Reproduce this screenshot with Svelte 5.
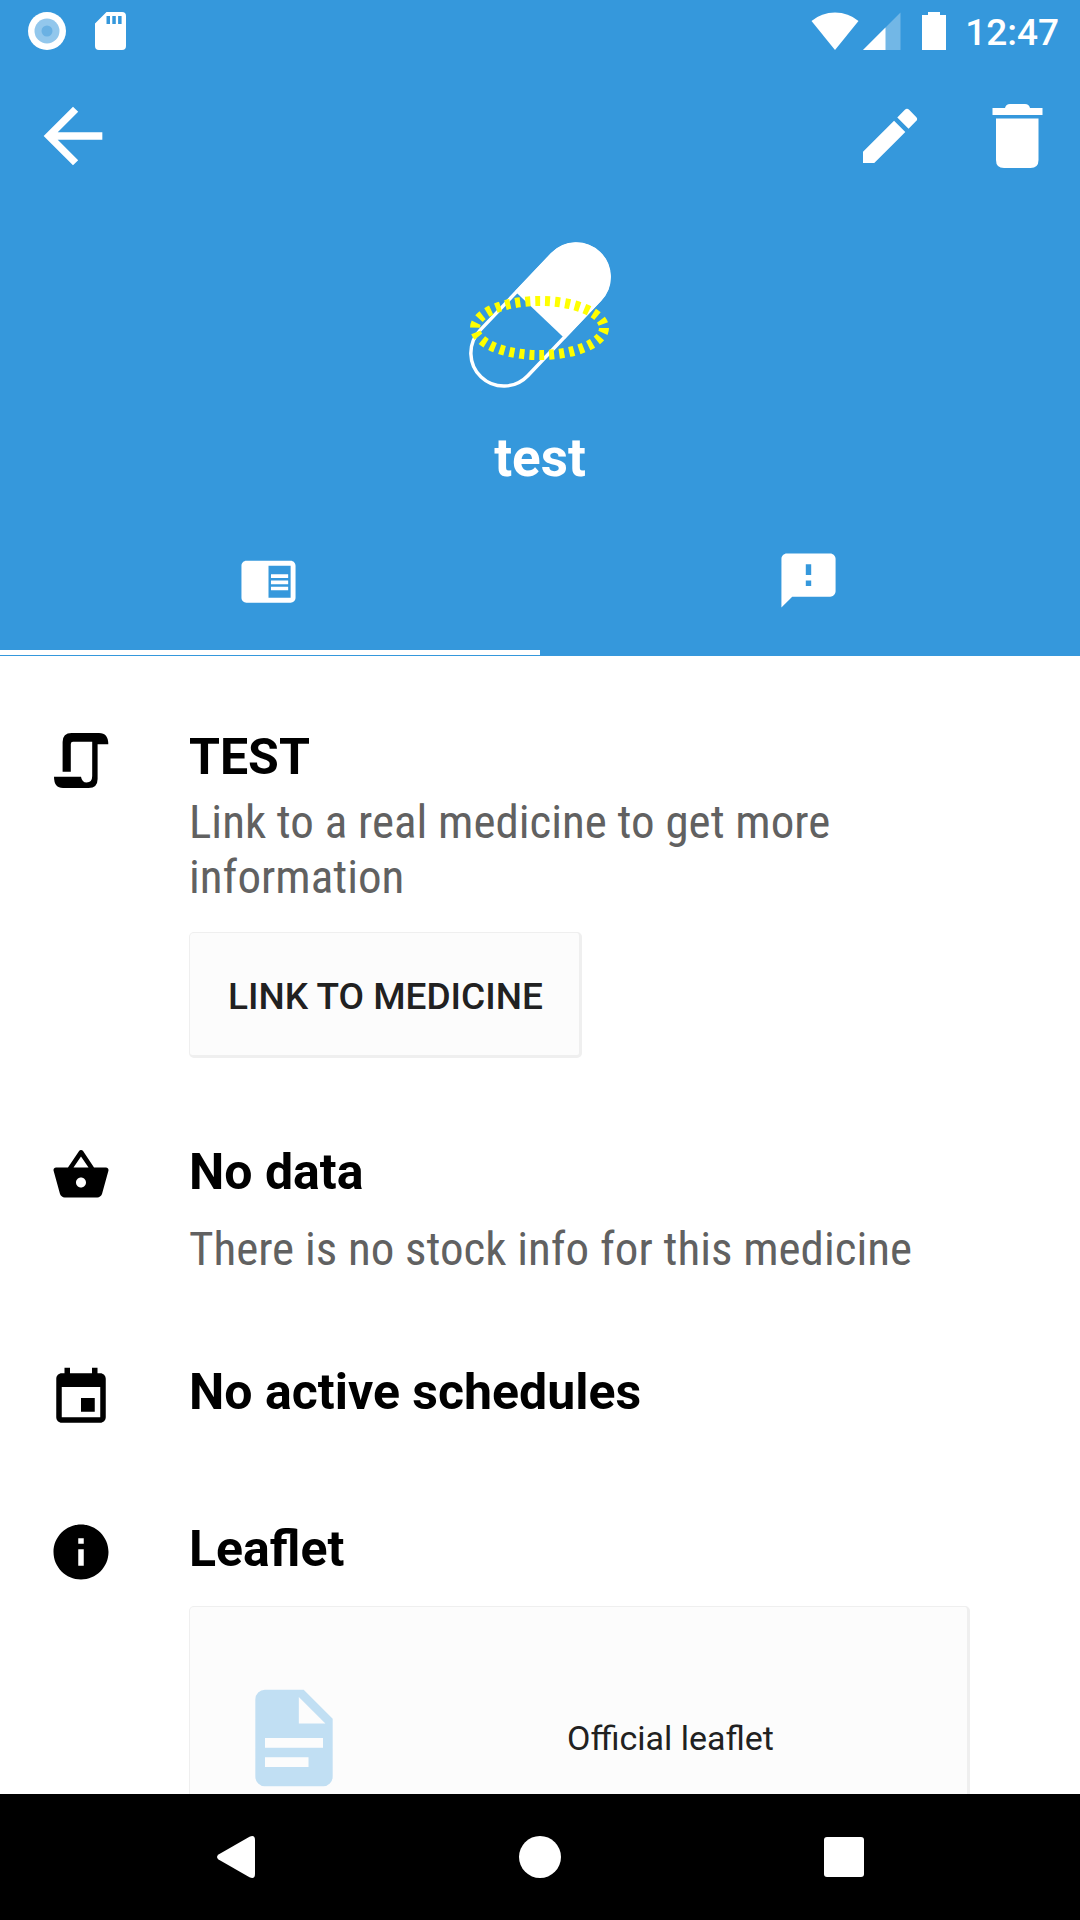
<script>
  let activeTab = $state('details');
</script>

<div class="app">
  <header>
    <div class="status">
      <div class="status-group left">
        <svg width="38" height="38" viewBox="0 0 38 38" aria-hidden="true">
          <circle cx="19" cy="19" r="19" fill="#fff" />
          <circle cx="19" cy="19" r="12.500" fill="#92c7ec" />
          <circle cx="19" cy="19" r="5.500" fill="#6ab1e3" />
        </svg>
        <svg width="31" height="38" viewBox="0 0 31 38" aria-hidden="true">
          <path fill="#fff" fill-rule="evenodd" d="M11.500 0H27q4 0 4 4v30q0 4-4 4H4q-4 0-4-4V11.500zM11.500 4v8h3.500V4zM17.300 4v8h3.500V4zM23.100 4v8h3.500V4z" />
        </svg>
      </div>
      <div class="status-group right">
        <svg width="48" height="38" viewBox="0 0 48 38" aria-hidden="true">
          <path fill="#fff" d="M0.500 9Q10.500 .5 24 .5T47.500 9L24 38z" />
        </svg>
        <svg class="signal" width="38" height="38" viewBox="0 0 38 38" aria-hidden="true">
          <path fill="#fff" fill-opacity=".3" d="M37.500 .5V38H0z" />
          <path fill="#fff" d="M22.500 15.500V38H0z" />
        </svg>
        <svg class="battery" width="24" height="38" viewBox="0 0 24 38" aria-hidden="true">
          <path fill="#fff" d="M6 0h12v3h6v35H0V3h6z" />
        </svg>
        <span class="clock">12:47</span>
      </div>
    </div>

    <div class="toolbar">
      <button class="icon-button back" aria-label="Back">
        <svg width="88" height="88" viewBox="0 0 24 24"><path fill="#fff" d="M20 11H7.830l5.590-5.590L12 4l-8 8 8 8 1.410-1.410L7.830 13H20v-2z" /></svg>
      </button>
      <div class="actions">
        <button class="icon-button" aria-label="Edit">
          <svg width="72" height="72" viewBox="0 0 24 24"><path fill="#fff" d="M3 17.250V21h3.750L14.700 13.050 17.100 10.650 13.350 6.900 3 17.250zM20.710 7.040a1 1 0 0 0 0-1.410l-2.340-2.340a1 1 0 0 0-1.410 0l-2.530 2.530 3.750 3.750 2.530-2.530z" /></svg>
        </button>
        <button class="icon-button" aria-label="Delete">
          <svg width="72" height="72" viewBox="0 0 72 72"><path fill="#fff" d="M11.500 8H24q1-4 5-4h15q4 0 5 4h12.500v7h-50zM15 18.500h42.500V60q0 8-8 8H23q-8 0-8-8z" /></svg>
        </button>
      </div>
    </div>

    <svg class="pill" width="148" height="152" viewBox="466 240 148 152" aria-hidden="true">
      <g transform="translate(540 315) rotate(-46.500)">
        <rect x="-85.500" y="-33" width="171" height="66" rx="33" fill="none" stroke="#fff" stroke-width="3.500" />
        <path fill="#fff" d="M0-34.500H52.500a34.500 34.500 0 0 1 0 69H0z" />
      </g>
      <ellipse cx="539.500" cy="328" rx="64.500" ry="27" fill="none" stroke="#ff0" stroke-width="10" stroke-dasharray="5 5" />
    </svg>
    <h1>test</h1>

    <div class="tabs" role="tablist">
      <button role="tab" class:active={activeTab === 'details'} aria-selected={activeTab === 'details'} aria-label="Details" onclick={() => (activeTab = 'details')}>
        <svg width="59" height="59" viewBox="0 0 24 24"><path fill="#fff" d="M13 12h7v1.500h-7zm0-2.500h7V11h-7zm0 5h7V16h-7zM21 4H3c-1.100 0-2 .9-2 2v13c0 1.100.9 2 2 2h18c1.100 0 2-.9 2-2V6c0-1.100-.9-2-2-2zm0 15h-9V6h9v13z" /></svg>
      </button>
      <button role="tab" class:active={activeTab === 'alerts'} aria-selected={activeTab === 'alerts'} aria-label="Alerts" onclick={() => (activeTab = 'alerts')}>
        <svg width="65" height="65" viewBox="0 0 24 24"><path fill="#fff" d="M20 2H4c-1.100 0-1.990.9-1.990 2L2 22l4-4h14c1.100 0 2-.9 2-2V4c0-1.100-.9-2-2-2zm-7 12h-2v-2h2v2zm0-4h-2V6h2v4z" /></svg>
      </button>
    </div>
  </header>

  <main>
    <section>
      <div class="icon">
        <svg width="55" height="55" viewBox="0 0 55 55" aria-hidden="true"><path d="M8.600 38.700V9Q8.600 0 17.600 0H45Q54.300 0 54.300 11.300H43.600V46Q43.600 55 34.600 55H9Q0 55 0 43.700H27Q28 49.500 32.600 49.500Q38.200 49.500 38.200 43V8.700H19Q16.800 8.700 16.800 11V38.700Z" /></svg>
      </div>
      <div class="body">
        <h2>TEST</h2>
        <p class="close">Link to a real medicine to get more information</p>
        <button class="raised">LINK TO MEDICINE</button>
      </div>
    </section>

    <section class="stock">
      <div class="icon">
        <svg width="60" height="60" viewBox="0 0 24 24" aria-hidden="true"><path d="M17.210 9l-4.380-6.560c-.19-.28-.51-.42-.83-.42-.32 0-.64.14-.83.43L6.790 9H2c-.55 0-1 .45-1 1 0 .09.01.18.04.27l2.540 9.270c.23.84 1 1.460 1.920 1.460h13c.92 0 1.690-.62 1.930-1.460l2.540-9.270L23 10c0-.55-.45-1-1-1h-4.790zM9 9l3-4.400L15 9H9zm3 8c-1.100 0-2-.9-2-2s.9-2 2-2 2 .9 2 2-.9 2-2 2z" /></svg>
      </div>
      <div class="body">
        <h2>No data</h2>
        <p>There is no stock info for this medicine</p>
      </div>
    </section>

    <section class="schedules">
      <div class="icon">
        <svg width="66" height="66" viewBox="0 0 24 24" aria-hidden="true"><path d="M17 12h-5v5h5v-5zM16 1v2H8V1H6v2H5c-1.110 0-1.990.9-1.990 2L3 19c0 1.100.89 2 2 2h14c1.100 0 2-.9 2-2V5c0-1.100-.9-2-2-2h-1V1h-2zm3 18H5V8h14v11z" /></svg>
      </div>
      <div class="body">
        <h2>No active schedules</h2>
      </div>
    </section>

    <section>
      <div class="icon">
        <svg width="66" height="66" viewBox="0 0 24 24" aria-hidden="true"><path d="M12 2C6.480 2 2 6.480 2 12s4.480 10 10 10 10-4.480 10-10S17.520 2 12 2zm1 15h-2v-6h2v6zm0-8h-2V7h2v2z" /></svg>
      </div>
      <div class="body">
        <h2>Leaflet</h2>
        <button class="card">
          <svg width="116" height="116" viewBox="0 0 24 24" aria-hidden="true"><path fill="#c1dff3" d="M13 9h5.500L13 3.500V9M6 2h8l6 6v12a2 2 0 0 1-2 2H6a2 2 0 0 1-2-2V4a2 2 0 0 1 2-2m9 16v-2H6v2h9m3-4v-2H6v2h12z" /></svg>
          <span>Official leaflet</span>
        </button>
      </div>
    </section>
  </main>

  <nav>
    <button aria-label="System back"><svg width="38" height="42" viewBox="0 0 38 42"><path fill="#fff" d="M1.500 18.500 32.500.8Q38-1.500 38 4v34q0 5.500-5.500 3.200L1.500 23.500Q-1.500 21 1.500 18.500z" /></svg></button>
    <button aria-label="Home"><svg width="42" height="42" viewBox="0 0 42 42"><circle cx="21" cy="21" r="21" fill="#fff" /></svg></button>
    <button aria-label="Recent apps"><svg width="40" height="40" viewBox="0 0 40 40"><rect width="40" height="40" rx="3" fill="#fff" /></svg></button>
  </nav>
</div>

<style>
  :global(body) {
    margin: 0;
  }

  .app {
    display: flex;
    flex-direction: column;
    height: 100vh;
    background: #fff;
    font-family: Roboto, 'Liberation Sans', sans-serif;
    color: #000;
  }

  svg {
    display: block;
    flex: none;
  }

  button {
    margin: 0;
    padding: 0;
    border: 0;
    background: none;
    color: inherit;
    font: inherit;
    cursor: pointer;
  }

  header {
    flex: none;
    display: flex;
    flex-direction: column;
    background: #3598dc;
    color: #fff;
  }

  .status {
    display: flex;
    justify-content: space-between;
    align-items: center;
    height: 62px;
    padding: 0 21px 0 28px;
  }

  .status-group {
    display: flex;
    align-items: center;
  }

  .left {
    gap: 29px;
  }

  .signal {
    margin-left: 4px;
  }

  .battery {
    margin: 0 19px 0 21px;
  }

  .clock {
    font-size: 37px;
    line-height: 58px;
    font-weight: 500;
    padding-top: 4px;
  }

  .toolbar {
    display: flex;
    justify-content: space-between;
    align-items: center;
    height: 148px;
    padding: 0 27px 0 29px;
  }

  .actions {
    display: flex;
    gap: 55px;
  }

  .pill {
    align-self: center;
    margin-top: 30px;
  }

  h1,
  h2 {
    margin: 0;
    font-size: 50px;
    line-height: 60px;
    font-weight: 700;
  }

  h1 {
    margin: 36px 0 16px;
    font-size: 53px;
    text-align: center;
  }

  .tabs {
    display: flex;
    padding-bottom: 1px;
  }

  .tabs button {
    flex: 1;
    display: flex;
    align-items: center;
    justify-content: center;
    height: 151px;
    padding: 2px 3px 0 0;
    box-sizing: border-box;
    border: solid transparent;
    border-width: 5px 0;
  }

  .tabs .active {
    border-bottom-color: #fff;
  }

  main {
    flex: 1;
    min-height: 0;
    display: flex;
    flex-direction: column;
    gap: 84px;
    padding: 71px 110px 0 48px;
    overflow-y: auto;
    scrollbar-width: none;
  }

  section {
    flex: none;
    display: flex;
    gap: 75px;
  }

  .stock {
    padding-bottom: 2px;
  }

  .schedules {
    padding-bottom: 4px;
  }

  .icon {
    flex: none;
    display: flex;
    align-items: center;
    justify-content: center;
    width: 66px;
    height: 66px;
  }

  .schedules .icon {
    padding-top: 3px;
  }

  .body {
    flex: 1;
    min-width: 0;
  }

  p {
    margin: 19px 0 0;
    font-family: 'Roboto Condensed', Roboto, sans-serif;
    font-size: 47px;
    line-height: 55px;
    color: #616161;
  }

  .close {
    margin-top: 7px;
  }

  .raised,
  .card {
    box-sizing: border-box;
    border: solid #efefef;
    border-width: 1px 3px 3px 1px;
    border-radius: 5px;
    background: #fcfcfc;
    color: #212121;
  }

  .raised {
    display: block;
    height: 126px;
    margin-top: 28px;
    padding: 4px 36px 0 38px;
    font-size: 37px;
    font-weight: 500;
  }

  .card {
    display: flex;
    align-items: center;
    gap: 22px;
    width: 100%;
    height: 265px;
    margin-top: 27px;
    padding-left: 46px;
    font-size: 34px;
  }

  .card span {
    flex: 1;
    text-align: center;
  }

  nav {
    flex: none;
    display: flex;
    justify-content: center;
    height: 126px;
    background: #000;
  }

  nav button {
    display: flex;
    align-items: center;
    justify-content: center;
    width: 304px;
  }
</style>
